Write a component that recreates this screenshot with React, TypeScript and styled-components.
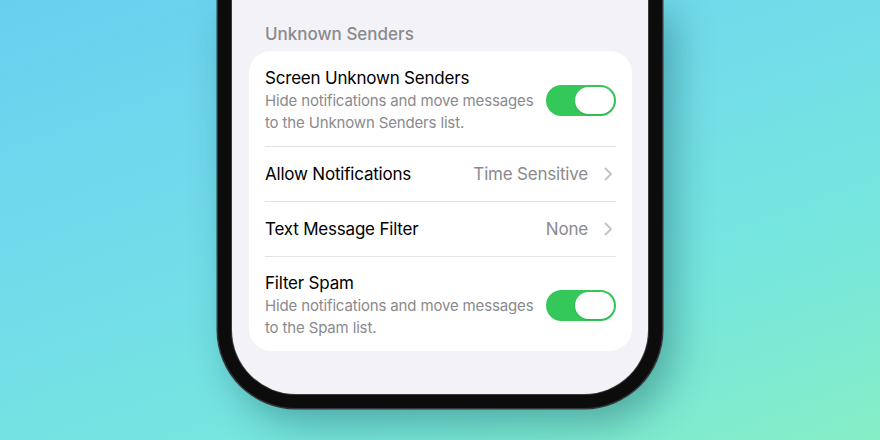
import styled, { createGlobalStyle } from "styled-components";

const GlobalStyle = createGlobalStyle`
  html, body {
    margin: 0;
    padding: 0;
  }
  body {
    font-family: Inter, "Noto Sans", "Liberation Sans", sans-serif;
    -webkit-font-smoothing: antialiased;
  }
`;

const Page = styled.div`
  width: 880px;
  height: 440px;
  overflow: hidden;
  display: flex;
  justify-content: center;
  align-items: flex-start;
  background: linear-gradient(160deg, #69cff0 0%, #72dcea 40%, #76e6de 70%, #86eec6 100%);
`;

const Phone = styled.div`
  width: 444px;
  height: 408px;
  box-sizing: border-box;
  padding: 0 14px 14px;
  background: #0c0c0d;
  border-radius: 0 0 78px 78px;
  box-shadow:
    0 0 0 1.5px #34363a,
    12px 16px 38px rgba(10, 70, 80, 0.38);
  display: flex;
`;

const Screen = styled.div`
  flex: 1;
  background: #f2f2f7;
  border-radius: 0 0 64px 64px;
  padding: 23px 16px 0 17px;
  box-sizing: border-box;
  display: flex;
  flex-direction: column;
  box-shadow: 0 0 0 1px #3a3b3e;
`;

const SectionHeader = styled.div`
  padding-left: 16px;
  font-size: 17px;
  line-height: 22px;
  font-weight: 500;
  color: #8a8a8e;
  margin-bottom: 6px;
`;

const Card = styled.div`
  background: #ffffff;
  border-radius: 22px;
  padding: 0 16px;
`;

const Row = styled.div<{ $tall?: boolean }>`
  display: flex;
  align-items: center;
  gap: 12px;
  min-height: ${({ $tall }) => ($tall ? "95px" : "55px")};
  padding: ${({ $tall }) => ($tall ? "15px 0 12px" : "0")};
  box-sizing: border-box;

  & + & {
    border-top: 1px solid #e3e3e6;
  }
`;

const Texts = styled.div`
  flex: 1;
  min-width: 0;
  display: flex;
  flex-direction: column;
`;

const Title = styled.div`
  font-size: 17px;
  line-height: 22px;
  color: #000000;
  letter-spacing: -0.2px;
  white-space: nowrap;
`;

const Subtitle = styled.div`
  font-size: 15px;
  line-height: 22px;
  color: #8a8a8e;
  letter-spacing: -0.15px;
  white-space: nowrap;

  ${Title} + & {
    margin-top: 1px;
  }
`;

const Value = styled.div`
  font-size: 17px;
  line-height: 22px;
  color: #8a8a8e;
  letter-spacing: -0.2px;
  margin-right: 4px;
`;

const ChevronBox = styled.div`
  display: flex;
  margin-right: 3px;
`;

const Track = styled.div<{ $on: boolean }>`
  width: 70px;
  height: 31px;
  border-radius: 16px;
  background: ${({ $on }) => ($on ? "#34c759" : "#e9e9eb")};
  padding: 2px;
  box-sizing: border-box;
  display: flex;
  justify-content: ${({ $on }) => ($on ? "flex-end" : "flex-start")};
  flex-shrink: 0;
`;

const Knob = styled.div`
  width: 39px;
  height: 27px;
  border-radius: 14px;
  background: #ffffff;
  box-shadow: 0 1px 2px rgba(0, 0, 0, 0.12);
`;

const Chevron = () => (
  <ChevronBox>
    <svg width="9" height="14" viewBox="0 0 9 14" fill="none">
      <path
        d="M1.5 1.5 L7 7 L1.5 12.5"
        stroke="#c4c4c7"
        strokeWidth="2"
        strokeLinecap="round"
        strokeLinejoin="round"
      />
    </svg>
  </ChevronBox>
);

function Toggle({ on }: { on: boolean }) {
  return (
    <Track $on={on}>
      <Knob />
    </Track>
  );
}

export default function App() {
  return (
    <>
      <GlobalStyle />
      <Page>
        <Phone>
          <Screen>
            <SectionHeader>Unknown Senders</SectionHeader>
            <Card>
              <Row $tall>
                <Texts>
                  <Title>Screen Unknown Senders</Title>
                  <Subtitle>Hide notifications and move messages</Subtitle>
                  <Subtitle>to the Unknown Senders list.</Subtitle>
                </Texts>
                <Toggle on />
              </Row>
              <Row>
                <Texts>
                  <Title>Allow Notifications</Title>
                </Texts>
                <Value>Time Sensitive</Value>
                <Chevron />
              </Row>
              <Row>
                <Texts>
                  <Title>Text Message Filter</Title>
                </Texts>
                <Value>None</Value>
                <Chevron />
              </Row>
              <Row $tall>
                <Texts>
                  <Title>Filter Spam</Title>
                  <Subtitle>Hide notifications and move messages</Subtitle>
                  <Subtitle>to the Spam list.</Subtitle>
                </Texts>
                <Toggle on />
              </Row>
            </Card>
          </Screen>
        </Phone>
      </Page>
    </>
  );
}
